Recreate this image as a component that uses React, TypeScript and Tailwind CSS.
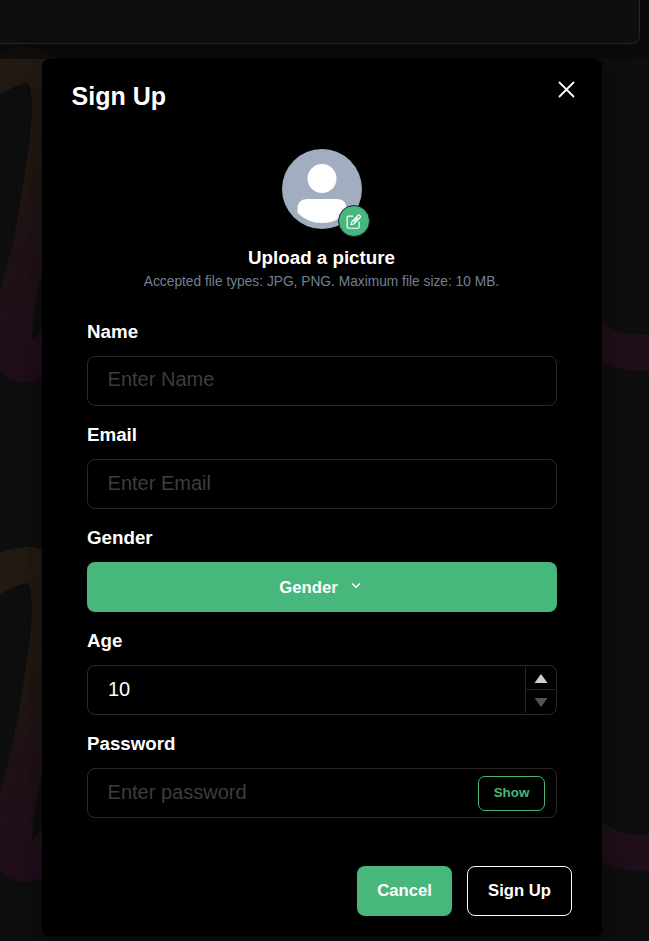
import { useState, type ReactNode } from "react";

function Swirl({ id, y }: { id: string; y: number }) {
  return (
    <g transform={`translate(0 ${y})`} fill={`url(#${id})`}>
      <defs>
        <linearGradient id={id} gradientUnits="userSpaceOnUse" x1="0" y1="47" x2="0" y2="382">
          <stop offset="0" stopColor="#221b12" />
          <stop offset="0.3" stopColor="#211812" />
          <stop offset="0.62" stopColor="#1f1216" />
          <stop offset="1" stopColor="#1f0d1b" />
        </linearGradient>
      </defs>
      <path d="M0 53C9 49 18 47 27 47C38 47 47 51 53 59L66 100L42 273C37 293 33 315 32 340L42 330L60 310L60 370L42 378C37 381 31 382 25 382C14 382 5 377 0 370V293L12 247Q20 210 25 173Q32 130 32 105Q31 84 27 83Q18 84 0 94Z" />
      <path d="M590 312L602 323Q620 335 640 335H649V371H638Q618 370 602 363L590 355Z" />
    </g>
  );
}

function Field({ label, children }: { label: string; children: ReactNode }) {
  return (
    <div className="flex h-[103px] flex-col">
      <label className="h-[35px] text-[18.75px] leading-[22px] font-bold">{label}</label>
      {children}
    </div>
  );
}

const inputStyle =
  "h-[50px] w-full rounded-[8px] border border-[#2a2a2a] bg-black pl-[19.6px] text-[20px] text-white outline-none placeholder:text-[#3d3d3d] placeholder:opacity-100";

export default function App() {
  const [age, setAge] = useState(10);
  const [visible, setVisible] = useState(false);
  return (
    <div className="relative h-[941px] w-[649px] overflow-hidden bg-[#0e0e0e] font-['Liberation_Sans',Arial,sans-serif] text-white">
      <svg className="absolute inset-0" width="649" height="941" viewBox="0 0 649 941">
        <Swirl id="swirl-a" y={0} />
        <Swirl id="swirl-b" y={500} />
      </svg>
      <div className="absolute inset-x-0 top-0 h-[59px] bg-[#080808]/70">
        <div className="h-[44px] w-[640px] rounded-br-[8px] border-r border-b border-[#252525] bg-[#0e0e0e]" />
      </div>

      <main className="relative mt-[59px] ml-[42px] h-[877px] w-[560px] rounded-[7px] bg-black shadow-[0_12px_19px_-4px_rgba(0,0,0,0.15),0_5px_30px_rgba(0,0,0,0.25)]">
        <header className="flex h-[90px] justify-between pl-[29.6px] pr-[27px]">
          <h1 className="pt-[22px] text-[25px] leading-[30px] font-bold">Sign Up</h1>
          <button aria-label="Close" className="mt-[22px] h-[17px] w-[17px]">
            <svg width="17" height="17" viewBox="0 0 17 17" stroke="white" strokeWidth="1.8" strokeLinecap="round">
              <path d="M1.5 1.5L15.5 15.5M15.5 1.5L1.5 15.5" />
            </svg>
          </button>
        </header>

        <section className="flex h-[172px] flex-col items-center">
          <div className="relative h-[80px] w-[80px]">
            <svg width="80" height="80" viewBox="0 0 80 80">
              <circle cx="40" cy="40" r="40" fill="#a0aec0" />
              <circle cx="40" cy="29.5" r="14.5" fill="white" />
              <path d="M15.5 60Q15.5 50 25 50H55Q64.5 50 64.5 60V64Q54 74 40 74Q26 74 15.5 64Z" fill="white" />
            </svg>
            <button aria-label="Edit picture" className="absolute top-[56px] left-[56px] flex h-[32px] w-[32px] items-center justify-center rounded-full border border-[#1a202c] bg-[#48b77b] pr-px">
              <svg width="17" height="17" viewBox="0 0 24 24" fill="none" stroke="white" strokeWidth="1.7" strokeLinecap="round" strokeLinejoin="round">
                <path d="M11 4.5H5C3.6 4.5 3 5.1 3 6.5V19.5C3 20.9 3.6 21.5 5 21.5H18C19.4 21.5 20 20.9 20 19.5V13" />
                <path d="M9.5 12.5L18.3 3.3C19.9 1.7 23 4.8 21.4 6.4L12.4 15.5L8.4 16.5Z" />
                <path d="M12.7 12.1L18 6.7" />
              </svg>
            </button>
          </div>
          <h2 className="mt-[17px] mr-px text-[18.75px] leading-[24px] font-bold">Upload a picture</h2>
          <p className="mr-px text-[13.75px] leading-[23px] whitespace-nowrap text-[#718096]">Accepted file types: JPG, PNG. Maximum file size: 10 MB.</p>
        </section>

        <form className="px-[45px]" onSubmit={(e) => e.preventDefault()}>
          <Field label="Name"><input className={`${inputStyle} pb-[3px]`} placeholder="Enter Name" /></Field>
          <Field label="Email"><input className={`${inputStyle} pb-px`} placeholder="Enter Email" /></Field>
          <Field label="Gender">
            <button type="button" className="flex h-[50px] items-center justify-center rounded-[8px] bg-[#48b77b] pr-[3px] text-[16.67px] font-bold">
              Gender
              <svg className="mb-[4px] ml-[13px] mr-[1px]" width="10" height="7" viewBox="0 0 10 7" fill="none" stroke="white" strokeWidth="1.4">
                <path d="M1.2 1.5L5 5.2L8.8 1.5" />
              </svg>
            </button>
          </Field>
          <Field label="Age">
            <div className="flex h-[50px] overflow-hidden rounded-[8px] border border-[#2a2a2a]">
              <div className="flex-1 pl-[20px] text-[20px] leading-[46px]">{age}</div>
              <div className="my-px flex w-[31px] flex-col border-l border-[#252525] pr-px">
                <button type="button" aria-label="Increase age" onClick={() => setAge(age + 1)} className="flex h-[23px] items-center justify-center border-b border-[#252525]">
                  <svg className="mt-[1px]" width="14" height="9" viewBox="0 0 14 9"><path d="M7 0L13.5 9H.5Z" fill="#cfcfcf" /></svg>
                </button>
                <button type="button" aria-label="Decrease age" onClick={() => setAge(Math.max(10, age - 1))} className="flex flex-1 items-center justify-center">
                  <svg className="mt-[2px]" width="14" height="9" viewBox="0 0 14 9"><path d="M7 9L13.5 0H.5Z" fill="#535353" /></svg>
                </button>
              </div>
            </div>
          </Field>
          <Field label="Password">
            <div className="flex h-[50px] items-center rounded-[8px] border border-[#2a2a2a] pr-[11px]">
              <input type={visible ? "text" : "password"} placeholder="Enter password" className="min-w-0 flex-1 bg-transparent pb-[3px] pl-[19.6px] text-[20px] outline-none placeholder:text-[#3d3d3d] placeholder:opacity-100" />
              <button type="button" onClick={() => setVisible(!visible)} className="h-[35px] w-[67px] rounded-[7px] border border-[#48b77b] pb-px text-[13.33px] font-bold text-[#48b77b]">{visible ? "Hide" : "Show"}</button>
            </div>
          </Field>
        </form>
        <footer className="mt-[30px] flex justify-end gap-[15px] pr-[30px] text-[16.67px] font-bold">
          <button className="h-[50px] w-[95px] rounded-[8px] bg-[#48b77b] pb-px">Cancel</button>
          <button className="h-[50px] w-[105px] rounded-[8px] border border-white pb-px">Sign Up</button>
        </footer>
      </main>
    </div>
  );
}
